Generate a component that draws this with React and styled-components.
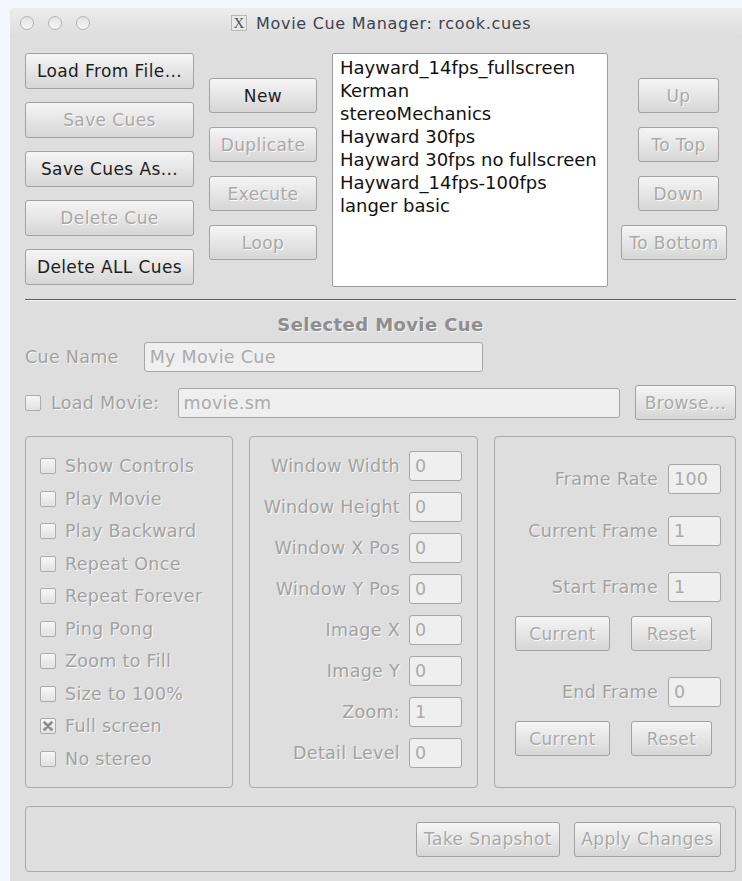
import React from 'react';
import styled, { createGlobalStyle } from 'styled-components';

const GlobalStyle = createGlobalStyle`
  html, body {
    margin: 0;
    padding: 0;
    background: #f3f6fd;
    overflow: hidden;
  }
  body {
    font-family: "DejaVu Sans", "Liberation Sans", sans-serif;
  }
`;

const Window = styled.div`
  margin: 8px 0 0 10px;
  width: 740px;
  height: 880px;
  background: #dedede;
  border-top-left-radius: 5px;
  overflow: hidden;
`;

const TitleBar = styled.div`
  height: 30px;
  display: flex;
  align-items: center;
  position: relative;
  background: linear-gradient(#ededed, #dcdcdc);
`;

const Lights = styled.div`
  display: flex;
  gap: 14px;
  padding-left: 10px;
`;

const Light = styled.span`
  width: 12px;
  height: 12px;
  border-radius: 50%;
  border: 1px solid #b2b2b2;
  background: linear-gradient(#e4e4e4, #f5f5f5);
`;

const Title = styled.div`
  position: absolute;
  left: 221px;
  top: 0;
  height: 30px;
  display: flex;
  align-items: center;
  gap: 9px;
  font-size: 16px;
  letter-spacing: 0.7px;
  color: #3c4350;
`;

const XBadge = styled.span`
  width: 14px;
  height: 14px;
  border: 1px solid #b8b8b8;
  background: #e8e8e8;
  display: flex;
  align-items: center;
  justify-content: center;
  font-family: "Liberation Serif", serif;
  font-size: 15px;
  letter-spacing: 0;
  line-height: 1;
  color: #555;
`;

const Content = styled.div`
  padding: 15px 14px 0 15px;
`;

const TopSection = styled.div`
  display: grid;
  grid-template-columns: 169px 108px 276px 1fr;
  column-gap: 15px;
  align-items: start;
`;

const ButtonColumn = styled.div`
  display: flex;
  flex-direction: column;
  align-items: ${p => (p.$start ? 'flex-start' : 'stretch')};
  gap: ${p => p.$gap}px;
  padding-top: ${p => p.$top || 0}px;
  margin-left: ${p => p.$shift || 0}px;
`;

const Button = styled.button`
  height: ${p => p.$h || 35}px;
  width: ${p => (p.$w ? `${p.$w}px` : 'auto')};
  margin-left: ${p => p.$indent || 0}px;
  padding: 0;
  border: 1px solid #a2a2a2;
  border-radius: 3px;
  background: linear-gradient(#f5f5f5, #d6d6d6);
  font-family: "DejaVu Sans", "Liberation Sans", sans-serif;
  font-size: 17px;
  letter-spacing: 0.4px;
  color: ${p => (p.disabled ? '#a9a9a9' : '#1e1e1e')};
  text-shadow: ${p => (p.disabled ? '1px 1px 0 rgba(255,255,255,0.85)' : 'none')};
  white-space: nowrap;
  flex: none;
`;

const CueList = styled.ul`
  list-style: none;
  margin: 0;
  padding: 2px 7px;
  height: 228px;
  overflow: hidden;
  background: #fff;
  border: 1px solid #9e9e9e;
  border-radius: 2px;
  font-size: 18px;
  line-height: 23px;
  white-space: nowrap;
  color: #111;
`;

const Separator = styled.hr`
  margin: 12px 0 0;
  border: none;
  border-top: 1px solid #5e5e5e;
  border-bottom: 1px solid #f2f2f2;
`;

const Heading = styled.div`
  margin-top: 13px;
  text-align: center;
  font-weight: bold;
  font-size: 18px;
  letter-spacing: 0.4px;
  color: #8e8e8e;
  text-shadow: 1px 1px 0 rgba(255,255,255,0.7);
`;

const FieldRow = styled.div`
  display: flex;
  align-items: center;
  gap: ${p => p.$gap || 10}px;
  margin-top: ${p => p.$top || 0}px;
`;

const Label = styled.span`
  font-size: 17.5px;
  letter-spacing: 0.3px;
  color: #a2a2a2;
  text-shadow: 1px 1px 0 rgba(255,255,255,0.8);
  white-space: nowrap;
  text-align: ${p => p.$align || 'left'};
`;

const TextField = styled.div`
  box-sizing: border-box;
  width: ${p => p.$w}px;
  height: 30px;
  padding: 0 5px;
  display: flex;
  align-items: center;
  border: 1px solid #a6a6a6;
  border-radius: 3px;
  background: #efefef;
  font-size: 17.5px;
  letter-spacing: 0.3px;
  color: #ababab;
  flex: ${p => (p.$grow ? '1' : 'none')};
`;

const Box = styled.span`
  box-sizing: border-box;
  width: 16px;
  height: 16px;
  border: 1px solid #acacac;
  border-radius: 2px;
  background: linear-gradient(#f6f6f6, #e2e2e2);
  display: inline-flex;
  align-items: center;
  justify-content: center;
  flex: none;
`;

const Panels = styled.div`
  display: grid;
  grid-template-columns: 208px 229px 242px;
  column-gap: 16px;
  margin-top: 16px;
  height: 352px;
`;

const Panel = styled.div`
  box-sizing: border-box;
  border: 1px solid #ababab;
  border-radius: 4px;
  padding: ${p => p.$pad};
`;

const CheckRow = styled.label`
  height: 32.5px;
  display: flex;
  align-items: center;
  gap: 9px;
`;

const NumberGrid = styled.div`
  display: grid;
  grid-template-columns: 1fr 53px;
  column-gap: 9px;
  row-gap: 11px;
  align-items: center;
`;

const FrameRow = styled.div`
  display: flex;
  justify-content: flex-end;
  align-items: center;
  gap: 10px;
  margin-top: ${p => p.$top}px;
`;

const FrameButtons = styled.div`
  display: flex;
  gap: 21px;
  padding-left: 20px;
  margin-top: ${p => p.$top}px;
`;

const Footer = styled.div`
  box-sizing: border-box;
  margin-top: 18px;
  height: 66px;
  border: 1px solid #ababab;
  border-radius: 4px;
  display: flex;
  justify-content: flex-end;
  align-items: center;
  gap: 14px;
  padding-right: 14px;
`;

const cues = [
  'Hayward_14fps_fullscreen',
  'Kerman',
  'stereoMechanics',
  'Hayward 30fps',
  'Hayward 30fps no fullscreen',
  'Hayward_14fps-100fps',
  'langer basic',
];

const options = [
  ['Show  Controls', false],
  ['Play Movie', false],
  ['Play Backward', false],
  ['Repeat Once', false],
  ['Repeat Forever', false],
  ['Ping Pong', false],
  ['Zoom to Fill', false],
  ['Size to 100%', false],
  ['Full screen', true],
  ['No stereo', false],
];

const windowFields = [
  ['Window Width', '0'],
  ['Window Height', '0'],
  ['Window X Pos', '0'],
  ['Window Y Pos', '0'],
  ['Image X', '0'],
  ['Image Y', '0'],
  ['Zoom:', '1'],
  ['Detail Level', '0'],
];

function Check({ checked }) {
  return (
    <Box>
      {checked && (
        <svg width="10" height="10" viewBox="0 0 10 10">
          <path d="M1.5 1.5 L8.5 8.5 M8.5 1.5 L1.5 8.5" stroke="#8a8a8a" strokeWidth="2.6" strokeLinecap="round" />
        </svg>
      )}
    </Box>
  );
}

function FrameButtonPair({ top }) {
  return (
    <FrameButtons $top={top}>
      <Button disabled $w={95}>Current</Button>
      <Button disabled $w={81}>Reset</Button>
    </FrameButtons>
  );
}

export default function App() {
  return (
    <>
      <GlobalStyle />
      <Window>
        <TitleBar>
          <Lights>
            <Light />
            <Light />
            <Light />
          </Lights>
          <Title>
            <XBadge>X</XBadge>
            Movie Cue Manager: rcook.cues
          </Title>
        </TitleBar>

        <Content>
          <TopSection>
            <ButtonColumn $gap={13}>
              <Button $h={36}>Load From File...</Button>
              <Button $h={36} disabled>Save Cues</Button>
              <Button $h={36}>Save Cues As...</Button>
              <Button $h={36} disabled>Delete Cue</Button>
              <Button $h={36}>Delete ALL Cues</Button>
            </ButtonColumn>
            <ButtonColumn $gap={14} $top={25}>
              <Button>New</Button>
              <Button disabled>Duplicate</Button>
              <Button disabled>Execute</Button>
              <Button disabled>Loop</Button>
            </ButtonColumn>
            <CueList>
              {cues.map(c => <li key={c}>{c}</li>)}
            </CueList>
            <ButtonColumn $gap={14} $top={25} $start $shift={-2}>
              <Button disabled $w={81} $indent={17}>Up</Button>
              <Button disabled $w={81} $indent={17}>To Top</Button>
              <Button disabled $w={81} $indent={17}>Down</Button>
              <Button disabled $w={106}>To Bottom</Button>
            </ButtonColumn>
          </TopSection>

          <Separator />
          <Heading>Selected Movie Cue</Heading>

          <FieldRow $top={7} $gap={25}>
            <Label>Cue Name</Label>
            <TextField $w={339}>My Movie Cue</TextField>
          </FieldRow>

          <FieldRow $top={13} $gap={18}>
            <FieldRow $gap={10}>
              <Check />
              <Label>Load Movie:</Label>
            </FieldRow>
            <TextField $grow>movie.sm</TextField>
            <Button disabled $w={101} $indent={-3}>Browse...</Button>
          </FieldRow>

          <Panels>
            <Panel $pad="13px 0 0 14px">
              {options.map(([name, on]) => (
                <CheckRow key={name}>
                  <Check checked={on} />
                  <Label>{name}</Label>
                </CheckRow>
              ))}
            </Panel>

            <Panel $pad="14px 15px 0 0">
              <NumberGrid>
                {windowFields.map(([name, value]) => (
                  <React.Fragment key={name}>
                    <Label $align="right">{name}</Label>
                    <TextField $w={53}>{value}</TextField>
                  </React.Fragment>
                ))}
              </NumberGrid>
            </Panel>

            <Panel $pad="0 14px 0 0">
              <FrameRow $top={27}>
                <Label>Frame Rate</Label>
                <TextField $w={53}>100</TextField>
              </FrameRow>
              <FrameRow $top={22}>
                <Label>Current Frame</Label>
                <TextField $w={53}>1</TextField>
              </FrameRow>
              <FrameRow $top={26}>
                <Label>Start Frame</Label>
                <TextField $w={53}>1</TextField>
              </FrameRow>
              <FrameButtonPair top={14} />
              <FrameRow $top={26}>
                <Label>End Frame</Label>
                <TextField $w={53}>0</TextField>
              </FrameRow>
              <FrameButtonPair top={14} />
            </Panel>
          </Panels>

          <Footer>
            <Button disabled $w={144}>Take Snapshot</Button>
            <Button disabled $w={147}>Apply Changes</Button>
          </Footer>
        </Content>
      </Window>
    </>
  );
}
